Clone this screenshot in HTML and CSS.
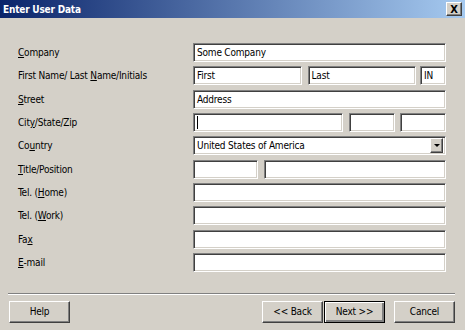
FILE: index.html
```html
<!DOCTYPE html>
<html lang="en">
<head>
  <meta charset="UTF-8" />
  <title>Enter User Data</title>
  <link rel="stylesheet" href="styles.css">
</head>
<body>
  <div class="window">
    <div class="titlebar">
      <span class="title">Enter User Data</span>
      <span class="close-btn">X</span>
    </div>

    <div class="form">
      <label><span><u>C</u>ompany</span></label>
      <div class="fields"><div class="field wide">Some Company</div></div>

      <label><span>First Name/ Last <u>N</u>ame/Initials</span></label>
      <div class="fields">
        <div class="field first">First</div>
        <div class="field last">Last</div>
        <div class="field initials">IN</div>
      </div>

      <label><span><u>S</u>treet</span></label>
      <div class="fields"><div class="field wide">Address</div></div>

      <label><span>Cit<u>y</u>/State/Zip</span></label>
      <div class="fields">
        <div class="field city"><span class="caret"></span></div>
        <div class="field state"></div>
        <div class="field zip"></div>
      </div>

      <label><span>Co<u>u</u>ntry</span></label>
      <div class="fields">
        <div class="field wide select">
          <span>United States of America</span>
          <span class="drop-btn"><span class="arrow"></span></span>
        </div>
      </div>

      <label><span><u>T</u>itle/Position</span></label>
      <div class="fields">
        <div class="field title-f"></div>
        <div class="field position"></div>
      </div>

      <label><span>Tel. (<u>H</u>ome)</span></label>
      <div class="fields"><div class="field wide"></div></div>

      <label><span>Tel. (<u>W</u>ork)</span></label>
      <div class="fields"><div class="field wide"></div></div>

      <label><span>Fa<u>x</u></span></label>
      <div class="fields"><div class="field wide"></div></div>

      <label><span><u>E</u>-mail</span></label>
      <div class="fields"><div class="field wide"></div></div>
    </div>

    <div class="separator"></div>

    <div class="buttons">
      <button class="btn">Help</button>
      <div class="spacer"></div>
      <button class="btn">&lt;&lt; Back</button>
      <button class="btn default">Next &gt;&gt;</button>
      <button class="btn cancel">Cancel</button>
    </div>
  </div>
</body>
</html>
```

FILE: styles.css
```css
body {
  margin: 0;
  background: #d4d0c8;
  font-family: Tahoma, 'DejaVu Sans Condensed', 'Liberation Sans', sans-serif;
  font-size: 10px;
  letter-spacing: -0.2px;
  color: #000;
}

.window {
  width: 465px;
  height: 330px;
  background: #d4d0c8;
  overflow: hidden;
}

.titlebar {
  height: 18px;
  display: flex;
  align-items: center;
  justify-content: space-between;
  padding: 0 3px 0 3px;
  background: linear-gradient(to right, #0a246a, #a6caf0);
}

.title {
  color: #fff;
  font-weight: bold;
  font-size: 10px;
}

.close-btn {
  width: 14px;
  height: 12px;
  display: flex;
  align-items: center;
  justify-content: center;
  background: #d4d0c8;
  border: 1px solid;
  border-color: #fff #404040 #404040 #fff;
  box-shadow: inset -1px -1px #808080;
  font-weight: bold;
  font-size: 11px;
  line-height: 1;
}

.form {
  display: grid;
  grid-template-columns: 175px 253px;
  row-gap: 4.33px;
  padding: 25px 0 0 18px;
}

label {
  display: flex;
  align-items: center;
  height: 19px;
}

u {
  text-decoration: underline;
  text-underline-offset: 1px;
}

.fields {
  display: flex;
  gap: 6px;
}

.field {
  box-sizing: border-box;
  height: 19px;
  background: #fff;
  border: 1px solid;
  border-color: #808080 #fff #fff #808080;
  box-shadow: inset 1px 1px #404040, inset -1px -1px #d4d0c8;
  padding: 0 3px;
  display: flex;
  align-items: center;
  white-space: nowrap;
  overflow: hidden;
}

.wide { width: 253px; }
.first { width: 109px; }
.last { width: 109px; margin-right: -2px; }
.initials { width: 26px; }
.city { width: 150px; }
.state { width: 46px; margin-right: -1px; }
.zip { width: 46px; }
.title-f { width: 65px; }
.position { width: 182px; }

.caret {
  width: 1px;
  height: 13px;
  background: #000;
}

.select {
  justify-content: space-between;
  padding-right: 2px;
}

.drop-btn {
  box-sizing: border-box;
  width: 13px;
  height: 15px;
  background: #d4d0c8;
  border: 1px solid;
  border-color: #fff #404040 #404040 #fff;
  box-shadow: inset -1px -1px #808080;
  display: flex;
  align-items: center;
  justify-content: center;
}

.arrow {
  width: 0;
  height: 0;
  border-left: 3px solid transparent;
  border-right: 3px solid transparent;
  border-top: 3px solid #000;
}

.separator {
  margin: 21px 10px 0 8px;
  height: 1px;
  background: #808080;
  border-bottom: 1px solid #fff;
}

.buttons {
  display: flex;
  margin: 6px 10px 0 9px;
}

.spacer {
  flex: 1;
}

.btn {
  box-sizing: border-box;
  width: 61px;
  height: 22px;
  font-family: inherit;
  font-size: 10px;
  letter-spacing: -0.2px;
  color: #000;
  background: #d4d0c8;
  border: 1px solid;
  border-color: #fff #404040 #404040 #fff;
  box-shadow: inset -1px -1px #808080;
  padding: 0;
}

.default {
  border: 1px solid #000;
  box-shadow: inset 1px 1px #fff, inset -2px -2px #808080, inset -1px -1px #404040;
  margin-left: 1px;
}

.cancel {
  margin-left: 9px;
}
```
